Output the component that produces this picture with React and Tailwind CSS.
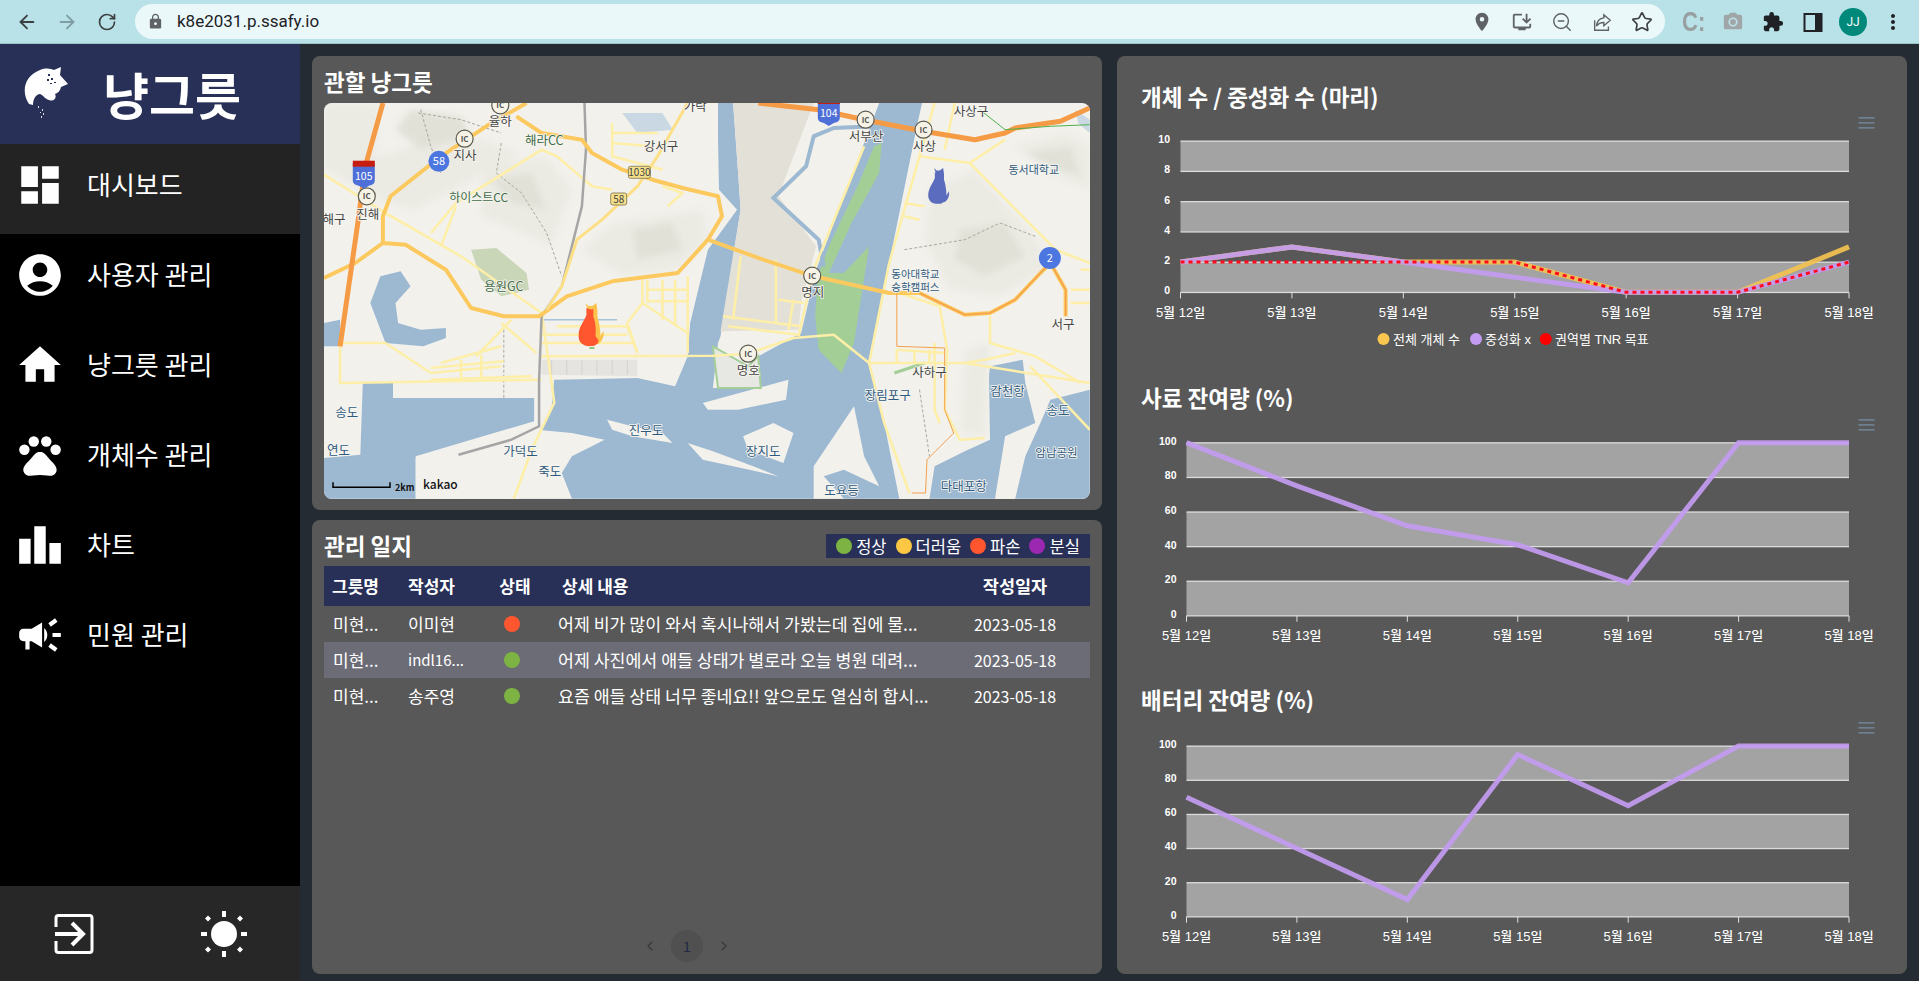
import React from "react";
import { ArrowLeft, ArrowRight, RotateCw, ZoomOut, Star, ChevronLeft, ChevronRight } from "lucide-react";
import { MdDashboard, MdAccountCircle, MdHome, MdPets, MdLeaderboard, MdCampaign, MdLock, MdLocationOn, MdInstallDesktop, MdExtension, MdCameraAlt, MdMoreVert } from "react-icons/md";

const X = (z) => +((z - 28) / 1.985).toFixed(1);
const Y = (z) => +((z - 40) / 3).toFixed(1);
const pts = (s) => s.trim().split(/\s+/).map((p) => { const [a, b] = p.split(","); return `${X(+a)},${Y(+b)}`; }).join(" ");

const water = [
  "810,40 810,150 812,300 848,360 790,480 755,700 750,800 725,890 650,865 485,870 480,950 440,1080 415,1227 1170,1227 1140,1000 1108,820 1150,520 1205,110 1215,40",
  "105,880 165,880 165,925 445,925 445,995 320,1050 210,1100 210,1227 28,1227 28,1105 100,1095",
  "140,560 180,545 200,590 170,640 175,700 220,720 270,715 270,745 225,770 150,760 120,640",
  "1350,830 1415,810 1420,880 1440,1000 1380,1040 1360,1227 1230,1227 1240,1130 1300,1085 1350,1050 1348,860",
  "1548,900 1548,1227 1400,1227 1420,1100 1450,1000 1470,930",
  "28,700 60,690 60,770 28,770",
];
const land = [
  "840,40 1130,40 1100,160 1005,540 975,730 890,800 895,895 800,895 810,760 815,740 855,360 850,250",
  "590,990 640,1010 700,1030 720,1060 640,1040 600,1020",
  "750,1060 780,1110 840,1130 930,1160 880,1130 800,1085",
  "780,940 950,870 945,930 850,960 790,960",
  "860,1040 920,1000 960,1030 940,1120 870,1080",
  "1000,1130 1080,950 1100,1100 1130,1190 1060,1140 1020,1160 1060,1227 1000,1227",
  "210,1105 450,1020 520,1030 585,1050 520,1100 500,1150 520,1227 210,1227",
];
const hills = [
  "28,40 140,40 130,200 250,150 340,150 420,190 300,290 210,360 150,340 28,240",
  "340,230 470,200 520,300 480,470 420,430 340,380",
  "600,400 780,360 790,450 730,540 620,560 540,480",
  "1230,300 1320,240 1450,460 1460,540 1370,620 1270,600 1220,460",
  "1300,780 1350,760 1340,1040 1290,1030",
  "1400,170 1500,130 1548,170 1548,300 1470,250",
  "290,1150 400,1120 390,1227 300,1227",
];
const hillsDeep = [
  "200,60 300,80 320,140 220,180 170,120",
  "360,270 440,250 470,360 400,340",
  "640,420 720,400 740,480 650,510",
  "1290,420 1380,400 1420,500 1340,560 1280,510",
  "1420,190 1510,170 1530,260 1470,230",
];
const boundaries = ["220,60 240,170 260,250", "215,70 300,90 380,130", "380,160 370,250 420,310 470,430 500,560", "1180,480 1300,450 1370,400 1440,440", "385,720 385,930", "1210,900 1230,1100"];
const roadsOrange = [
  "145,40 110,230 95,400 60,770",
  "890,40 1010,60 1100,90 1218,125 1320,150 1380,130 1400,115 1490,95 1548,55",
];
const roadsYellow = [
  "430,40 350,110 260,200 160,320 145,380 145,460",
  "28,565 90,520 145,460 190,465 270,540 320,655 385,680 455,680 510,620 600,575 730,550 790,450 818,380 810,320 740,295 680,270 620,240 560,190 540,150 460,130 410,80",
  "790,450 900,510 1000,560 1150,610 1210,610 1300,675 1350,670 1400,630 1450,550 1470,520 1500,600 1500,680",
  "750,40 690,200 650,290 580,390 530,450 500,590 470,660",
];
const roadsPale = [
  "28,255 150,370 300,500 460,670", "60,770 60,880 460,870", "60,760 150,760 240,850", "240,850 380,830", "240,870 440,860", "260,820 380,770", "240,835 385,815", "300,810 300,870", "340,795 340,865",
  "460,800 800,798 870,792 960,745 1040,735 1110,820 1300,820 1548,880", "490,710 630,710 650,790", "460,760 640,760", "460,735 630,735",
  "660,570 660,640 630,700 650,790", "660,640 750,730 750,790", "750,560 750,730", "670,600 750,600", "670,635 750,635", "700,570 700,690", "670,570 670,640", "725,570 725,710",
  "480,880 485,940 440,1080 405,1227", "460,670 480,880", "1240,40 1210,200 1150,520 1110,820 1140,1000 1190,1210", "1210,200 1310,220 1380,150",
  "1310,220 1480,480 1548,520", "1170,610 1250,650 1265,780 1260,960 1290,1050 1340,1045", "1350,680 1350,760 1440,800 1530,880", "1100,170 1000,540 970,740",
  "855,500 840,690", "820,680 975,710", "830,710 970,735", "930,630 980,640", "925,510 925,700", "960,630 950,720", "600,100 600,200 700,240", "600,130 690,130", "600,160 680,170",
  "240,430 290,340 460,180 490,200 560,290 600,300", "290,350 260,470", "380,700 450,790", "400,690 330,800", "1180,340 1220,350", "1180,380 1210,390", "1165,780 1260,790", "1165,780 1165,820", "1200,780 1200,820", "1230,780 1230,820",
  "1240,760 1240,960 1250,1000", "1300,820 1340,810 1400,790", "1430,830 1548,1020", "1280,40 1260,180", "700,290 740,310 710,350", "1530,540 1548,540", "1510,600 1548,600", "1510,640 1548,640",
];
const labels = [
  ["율하",378,95],["해라CC",465,152,"g"],["지사",308,197],["강서구",697,168],["가락",765,50],["사상구",1312,65],["서부산",1104,140],["사상",1220,170],["동서대학교",1437,238,"b",11],
  ["하이스트CC",335,322,"g",12],["진해",115,372],["해구",48,388],["용원GC",385,590,"g"],["명지",998,607],["동아대학교",1202,550,"b",10.5],["승학캠퍼스",1202,590,"b",10.5],["서구",1495,703],["사하구",1230,848],["명호",870,842],
  ["장림포구",1147,915,"b"],["감천항",1385,903,"b"],["송도",1485,962,"b"],["암남공원",1482,1087,"b",11.5],["송도",73,968,"b"],["연도",57,1080,"b"],["진우도",667,1020,"b"],["장지도",900,1085,"b"],["가덕도",418,1083,"b"],["죽도",476,1143,"b"],["도요등",1055,1200,"b"],["다대포항",1298,1190,"b"],
];
const ics = [[113,320],[307,147],[378,47],[1103,90],[1218,120],[997,558],[870,792]];

function Cat({ x, y, w, h, fill, back }) {
  return (
    <svg x={x} y={y} width={w} height={h} viewBox="0 0 26 47">
      <path d="M7 0 L10 3 L14 3 L18 0 L19 7 L19 14 C21 20 22 28 22 33 L25 28 C26 33 24 38 20 41 L15 41 L12 14 Z" fill={back || fill} />
      <path d="M8 5 C11 6 13 7 15 6 L15 14 C17 18 18 28 17 33 L20 37 C20 41 17 43 13 43 C6 44 0 40 0 33 C0 24 6 18 8 12 Z" fill={fill} />
      {back && <rect x="11" y="44" width="5" height="2" fill="#8cc77c" />}
    </svg>
  );
}

function KakaoMap() {
  return (
    <svg viewBox="0 0 766 396" width="766" height="396" className="block">
      <rect width="766" height="396" fill="#f3f1ec" />
      <g className="blur-[3px]">
        {hills.map((p, i) => <polygon key={i} points={pts(p)} fill="#ebebe4" />)}
        {hillsDeep.map((p, i) => <polygon key={i} points={pts(p)} fill="#e1e1d8" />)}
      </g>
      <polygon points={pts("320,480 370,475 430,550 435,600 380,620 340,570")} fill="#c9d6b8" />
      <polygon points={pts("620,70 700,70 720,120 650,130")} fill="#c9d8e2" />
      <polygon points={pts("1520,60 1548,90 1548,130 1525,100")} fill="#c9d8e2" />
      <polygon points={pts("460,810 650,810 650,860 460,855")} fill="#e6e4e0" />
      {boundaries.map((p, i) => <polyline key={i} points={pts(p)} fill="none" stroke="#a7a79a" strokeWidth="1" strokeDasharray="3 2" />)}
      {water.map((p, i) => <polygon key={i} points={pts(p)} fill="#9db9d2" />)}
      {land.map((p, i) => <polygon key={i} points={pts(p)} fill="#f3f1ec" />)}
      <polygon points={pts("840,40 1000,40 930,320 1005,470 975,640 970,720 815,725 855,360 850,250")} fill="#e3e0d8" />
      <polygon points={pts("1135,160 1120,170 1090,280 1030,470 1008,560 1003,680 1010,780 1055,850 1080,760 1110,470 1060,550 1030,550 1075,400 1130,250")} fill="#a3cf97" />
      <polygon points={pts("800,770 810,895 895,895 890,800 870,830")} fill="#e7e7e4" stroke="#a3cf97" strokeWidth="2" />
      <polyline points={pts("1120,110 1040,115 1000,140 985,230 920,325 1010,450 1020,530")} fill="none" stroke="#9db9d2" strokeWidth="4" />
      <polyline points={pts("460,690 520,690 610,690")} fill="none" stroke="#a8c4dc" strokeWidth="1.5" />
      <polyline points={pts("1160,850 1220,820")} fill="none" stroke="#a3cf97" strokeWidth="3" />
      {roadsPale.map((p, i) => <polyline key={i} points={pts(p)} fill="none" stroke="#fdeea8" strokeWidth="2.6" strokeLinejoin="round" />)}
      {[480, 510, 540, 570, 600, 630].map((a) => <line key={a} x1={X(a)} y1={Y(812)} x2={X(a)} y2={Y(855)} stroke="#cfcdc8" strokeWidth="0.8" />)}
      <polyline points={pts("545,40 548,180 540,350 500,590 460,680 455,870 455,1010 400,1050 295,1095")} fill="none" stroke="#a5a5a5" strokeWidth="2.5" />
      {roadsYellow.map((p, i) => <polyline key={i} points={pts(p)} fill="none" stroke={i === 3 ? "#fddf86" : "#fcc95f"} strokeWidth={i === 3 ? 3 : 4} strokeLinejoin="round" />)}
      <polyline points={pts("1210,610 1300,675 1350,670 1400,630 1450,550 1470,520 1500,600 1500,680")} fill="none" stroke="#f4a04c" strokeWidth="1.5" />
      <polyline points={pts("1165,610 1165,770 1260,775 1260,960 1278,1030 1225,1110 1222,1210 1195,1210")} fill="none" stroke="#f4a04c" strokeWidth="1" />
      {roadsOrange.map((p, i) => <polyline key={i} points={pts(p)} fill="none" stroke="#f69b45" strokeWidth="5" strokeLinejoin="round" />)}
      <polyline points={pts("1330,60 1380,120 1470,110 1548,105")} fill="none" stroke="#4db04d" strokeWidth="1" />
      {ics.map(([a, b], i) => (
        <g key={i}>
          <circle cx={X(a)} cy={Y(b)} r="8.5" fill="#f6f3e6" stroke="#5b5b50" strokeWidth="1.2" />
          <text x={X(a)} y={Y(b) + 3} textAnchor="middle" fontSize="8" fontWeight="700" fill="#555">IC</text>
        </g>
      ))}
      <circle cx={X(256)} cy={Y(215)} r="10.5" fill="#4c76e0" />
      <text x={X(256)} y={Y(215) + 4} textAnchor="middle" fontSize="11" fill="#fff">58</text>
      <circle cx={X(1469)} cy={Y(505)} r="11" fill="#4c76e0" />
      <text x={X(1469)} y={Y(505) + 4} textAnchor="middle" fontSize="11" fill="#fff">2</text>
      {[[107, 258, "105"], [1030, 70, "104"]].map(([a, b, t]) => (
        <g key={t}>
          <path d={`M${X(a) - 11} ${Y(b) - 12} h22 v17 q0 4 -6 5 l-5 3 l-5 -3 q-6 -1 -6 -5 Z`} fill="#4f6fd8" />
          <rect x={X(a) - 11} y={Y(b) - 15} width="22" height="6" fill="#c51d10" />
          <text x={X(a)} y={Y(b) + 4} textAnchor="middle" fontSize="10.5" fill="#fff">{t}</text>
        </g>
      ))}
      {[[654, 248, "1030", 22], [613, 328, "58", 16]].map(([a, b, t, w]) => (
        <g key={t}>
          <rect x={X(a) - w / 2} y={Y(b) - 6} width={w} height="12" rx="2" fill="#f5e08a" stroke="#77704a" strokeWidth="0.8" />
          <text x={X(a)} y={Y(b) + 4} textAnchor="middle" fontSize="10" fill="#444">{t}</text>
        </g>
      ))}
      {labels.map(([t, a, b, k, s], i) => (
        <text key={i} x={X(a)} y={Y(b) + 5} textAnchor="middle" fontSize={s || 12.5} stroke="#f6f5f0" strokeWidth="1.6" paintOrder="stroke"
          fill={k === "g" ? "#3f6b47" : k === "b" ? "#2f5a80" : "#444"}>{t}</text>
      ))}
      <Cat x={X(533)} y={Y(640)} w="26" h="47" fill="#ff5630" back="#fcc34c" />
      <Cat x={X(1227)} y={Y(235)} w="22" h="39" fill="#5b6bbd" />
      <path d={`M9 ${Y(1178)} v5 h57 v-5`} fill="none" stroke="#000" strokeWidth="1.5" />
      <text x="71" y={Y(1192) + 4} fontSize="9" fontWeight="700" fill="#111">2km</text>
      <text x="99" y={Y(1187) + 4} fontSize="12" fontWeight="500" fill="#111">kakao</text>
    </svg>
  );
}

const xTicks = ["5월 12일", "5월 13일", "5월 14일", "5월 15일", "5월 16일", "5월 17일", "5월 18일"];

function Chart({ vbY, h, left, top, bottom, ticks, labelY, series, burger, legend, labelX }) {
  const right = 1849;
  const n = ticks.length - 1;
  const yAt = (i) => top + ((bottom - top) * i) / n;
  const xAt = (i) => left + ((right - left) * i) / 6;
  const max = +ticks[0];
  const valY = (v) => bottom - ((bottom - top) * v) / max;
  return (
    <svg viewBox={`1117 ${vbY} 790 ${h}`} width="790" height={h} className="block font-['Liberation_Sans','Noto_Sans_CJK_KR',sans-serif]">
      <g fill="#6e8192">
        <rect x="1858.5" y={burger} width="16" height="1.7" />
        <rect x="1858.5" y={burger + 5} width="16" height="1.7" />
        <rect x="1858.5" y={burger + 10} width="16" height="1.7" />
      </g>
      {[0, 2, 4].map((i) => <rect key={i} x={left} y={yAt(i)} width={right - left} height={yAt(i + 1) - yAt(i)} fill="#a3a3a3" />)}
      {ticks.map((t, i) => (
        <g key={t}>
          <rect x={left} y={yAt(i) - 0.5} width={right - left} height="1.3" fill="#dcdcdc" />
          <text x={labelX} y={yAt(i) + 2} textAnchor="end" fontSize="10.5" fontWeight="700" fill="#fff">{t}</text>
        </g>
      ))}
      {xTicks.map((t, i) => (
        <g key={t}>
          <rect x={xAt(i) - 0.5} y={bottom} width="1" height="6" fill="#e0e0e0" />
          <text x={xAt(i)} y={labelY} textAnchor="middle" fontSize="13" fontWeight="500" fill="#fff">{t}</text>
        </g>
      ))}
      {series.map((s, k) => (
        <polyline key={k} points={s.data.map((v, i) => `${xAt(i)},${valY(v)}`).join(" ")} fill="none" stroke={s.color} strokeWidth={s.w || 5}
          strokeDasharray={s.dash} strokeOpacity={s.dash ? 1 : 0.92} strokeLinejoin="miter" />
      ))}
      {legend && (
        <g fontSize="13" fill="#fff">
          <circle cx="1383.5" cy="339" r="6" fill="#f9c74f" />
          <text x="1393" y="343.500">전체 개체 수</text>
          <circle cx="1476" cy="339" r="6" fill="#c39bf0" />
          <text x="1485" y="343.500">중성화 x</text>
          <circle cx="1545.7" cy="339" r="6" fill="#ff0000" />
          <text x="1555" y="343.500">권역별 TNR 목표</text>
        </g>
      )}
    </svg>
  );
}

const nav = [
  [MdDashboard, "대시보드"], [MdAccountCircle, "사용자 관리"], [MdHome, "냥그릇 관리"], [MdPets, "개체수 관리"], [MdLeaderboard, "차트"], [MdCampaign, "민원 관리"],
];
const rows = [
  ["미현...", "이미현", "#ff5630", "어제 비가 많이 와서 혹시나해서 가봤는데 집에 물...", false],
  ["미현...", "indl16...", "#7cb342", "어제 사진에서 애들 상태가 별로라 오늘 병원 데려...", true],
  ["미현...", "송주영", "#7cb342", "요즘 애들 상태 너무 좋네요!! 앞으로도 열심히 합시...", false],
];
const legendItems = [["#7cb342", "정상"], ["#fcc742", "더러움"], ["#ff5630", "파손"], ["#9c27b0", "분실"]];

function Browser() {
  return (
    <div className="h-[44px] shrink-0 bg-[#b8e2e7] border-b border-[#9cc3c8] flex items-center text-[#3c4043]">
      <div className="w-[135px] shrink-0 flex items-center pl-[16px] gap-[18px]">
        <ArrowLeft size={22} strokeWidth={2} />
        <ArrowRight size={22} strokeWidth={2} className="text-[#7f9ea2]" />
        <RotateCw size={20} strokeWidth={2} className="ml-[1px]" />
      </div>
      <div className="w-[1530px] h-[35px] rounded-full bg-[#ebf8f9] flex items-center pl-[12px] pr-[12px]">
        <MdLock size={17} className="text-[#5f6368]" />
        <span className="ml-[13px] text-[17px] text-[#202124] font-['Roboto',sans-serif]">k8e2031.p.ssafy.io</span>
        <div className="ml-auto flex items-center gap-[18px] text-[#5f6368]">
          <MdLocationOn size={22} />
          <MdInstallDesktop size={22} />
          <ZoomOut size={22} strokeWidth={1.6} />
          <svg width="22" height="22" viewBox="0 0 24 24" fill="none" stroke="currentColor" strokeWidth="1.5"><path d="M4 10v11h15v-4" /><path d="M14 4l7 6-7 6v-3.5c-3.5 0-6 1-8 4 .5-5 3.500-8.500 8-9z" /></svg>
          <Star size={22} strokeWidth={1.8} className="text-[#3c4043]" />
        </div>
      </div>
      <div className="flex-1 flex items-center pl-[17px] gap-[18px]">
        <span className="w-[22px] text-center text-[22px] font-bold text-[#989fa1] font-['Liberation_Sans',sans-serif] leading-none scale-y-125">C:</span>
        <MdCameraAlt size={22} className="text-[#a0a6a8]" />
        <MdExtension size={22} className="text-[#202124]" />
        <svg width="22" height="22" viewBox="0 0 22 22"><rect x="2.500" y="3" width="17" height="17" fill="none" stroke="#202124" strokeWidth="2" /><rect x="13" y="3" width="7" height="17" fill="#202124" /></svg>
        <div className="w-[28px] h-[28px] -ml-[3px] rounded-full bg-[#00897b] text-white text-[12px] flex items-center justify-center font-['Roboto',sans-serif]">JJ</div>
        <MdMoreVert size={24} className="-ml-[4px] text-[#202124]" />
      </div>
    </div>
  );
}

function Sidebar() {
  return (
    <aside className="w-[300px] shrink-0 bg-black flex flex-col text-white">
      <div className="h-[100px] bg-[#283058] flex items-center">
        <svg width="46" height="52" viewBox="0 0 46 52" className="ml-[23px] mb-[3px]">
          <path d="M6 37 C-2 25 1 9 17 3 C24 0 28 2 31 3 L38 0 L37 8 L45 17 L38 20 C37 24 35 26 32 27 C34 31 31 35 26 33 C22 32 20 28 17 27 C13 27 10 32 10 38 Z" fill="#fff" />
          <path d="M25 7h2v2h-2zM28 11h2v2h-2zM24 12h2v2h-2zM31 15h2v1h-2zM27 16h2v1h-2z" fill="#283058" />
          <path d="M15 39h1v2h-1zM19 42h1v2h-1zM17 45h1v1h-1zM20 46h1v2h-1zM18 49h1v2h-1z" fill="#ddd" />
        </svg>
        <span className="ml-[34px] -mt-[3px] text-[50px] font-bold leading-none">냥그릇</span>
      </div>
      {nav.map(([Icon, label], i) => (
        <div key={label} className={`h-[90px] flex items-center pl-[15px] pb-[8px] ${i === 0 ? "bg-[#232323]" : ""}`}>
          <Icon size={50} className="shrink-0" />
          <span className="ml-[22px] -mt-[3px] text-[26px] leading-none">{label}</span>
        </div>
      ))}
      <div className="mt-auto h-[95px] bg-[#272727] flex items-center justify-around">
        <svg width="44" height="44" viewBox="0 0 44 44" fill="none" stroke="#fff" strokeWidth="3">
          <path d="M4 15 V6 q0 -2.500 2.500 -2.500 h31 q2.500 0 2.500 2.500 v32 q0 2.500 -2.500 2.500 h-31 q-2.500 0 -2.500 -2.500 v-9" />
          <path d="M3 22 H32" strokeWidth="4" />
          <path d="M20 11 L31 22 L20 33" strokeWidth="4" />
        </svg>
        <svg width="48" height="48" viewBox="0 0 48 48" fill="#fff">
          <circle cx="24" cy="24" r="13" />
          <rect x="22" y="1" width="4" height="6" />
          <rect x="22" y="41" width="4" height="6" />
          <rect x="1" y="22" width="6" height="4" />
          <rect x="41" y="22" width="6" height="4" />
          <path d="M8 5.500l3 3-3 3-3-3zM40 5.500l3 3-3 3-3-3zM8 36.500l3 3-3 3-3-3zM40 36.500l3 3-3 3-3-3z" />
        </svg>
      </div>
    </aside>
  );
}

function MapPanel() {
  return (
    <section className="h-[454px] rounded-lg bg-[#585858] px-[12px] flex flex-col">
      <h2 className="h-[47px] flex items-center pt-[5px] text-[22.5px] font-bold text-white">관할 냥그릇</h2>
      <div className="rounded-lg overflow-hidden w-[766px] h-[396px]">
        <KakaoMap />
      </div>
    </section>
  );
}

function LogPanel() {
  return (
    <section className="h-[454px] rounded-lg bg-[#585858] px-[12px] flex flex-col text-white">
      <div className="h-[46px] flex items-center justify-between pt-[6px]">
        <h2 className="text-[22.5px] font-bold">관리 일지</h2>
        <div className="h-[24px] w-[264px] bg-[#283058] flex items-center justify-center gap-[9px] text-[16.5px]">
          {legendItems.map(([c, t]) => (
            <span key={t} className="flex items-center gap-[4px]">
              <span className="w-[16px] h-[16px] rounded-full" style={{ backgroundColor: c }} />
              {t}
            </span>
          ))}
        </div>
      </div>
      <div className="grid grid-cols-[76px_84px_62px_394px_150px] h-[40px] bg-[#283058] items-center text-[17px] font-semibold">
        <span className="pl-[8px]">그릇명</span>
        <span className="pl-[8px]">작성자</span>
        <span className="text-center">상태</span>
        <span className="pl-[16px]">상세 내용</span>
        <span className="text-center text-[17.5px]">작성일자</span>
      </div>
      {rows.map(([a, b, c, d, hl], i) => (
        <div key={i} className={`grid grid-cols-[76px_84px_62px_394px_150px] h-[36px] items-center text-[17px] ${hl ? "bg-[#6c6c76]" : ""}`}>
          <span className="pl-[9px] whitespace-nowrap">{a}</span>
          <span className={`pl-[8px] whitespace-nowrap ${i === 1 ? "text-[15px]" : ""}`}>{b}</span>
          <span className="flex justify-center pr-[7px]"><span className="w-[16px] h-[16px] rounded-full" style={{ backgroundColor: c }} /></span>
          <span className="pl-[12px] whitespace-nowrap text-[17.3px]">{d}</span>
          <span className="text-center text-[16px]">2023-05-18</span>
        </div>
      ))}
      <div className="mt-auto mb-[12px] pr-[40px] flex items-center justify-center gap-[13px] text-[#3a3a3a]">
        <ChevronLeft size={16} />
        <span className="w-[32px] h-[32px] rounded-full bg-[#505050] flex items-center justify-center text-[14px] text-[#1f2a44]">1</span>
        <ChevronRight size={16} />
      </div>
    </section>
  );
}

function ChartPanel() {
  return (
    <section className="w-[790px] rounded-lg bg-[#585858] text-white flex flex-col">
      <h2 className="pl-[24px] pt-[25px] text-[22.5px] leading-[30px] font-bold">개체 수 / 중성화 수 (마리)</h2>
      <Chart vbY={111} h={245} left={1180.5} top={141} bottom={292.3} labelX={1170} labelY={317} burger={117} legend
        ticks={["10", "8", "6", "4", "2", "0"]}
        series={[
          { data: [2, 3, 2, 2, 0, 0, 3], color: "#f3c250" },
          { data: [2, 3, 2, 1, 0, 0, 2], color: "#c39bf0" },
          { data: [2, 2, 2, 2, 0, 0, 2], color: "#ff0a1f", w: 3, dash: "4 4" },
        ]} />
      <h2 className="pl-[24px] pt-[26px] text-[22.5px] leading-[30px] font-bold">사료 잔여량 (%)</h2>
      <Chart vbY={412} h={248} left={1186.5} top={442.7} bottom={615.7} labelX={1176.5} labelY={640} burger={419}
        ticks={["100", "80", "60", "40", "20", "0"]}
        series={[{ data: [100, 75, 52, 41, 19, 100, 100], color: "#c39bf0" }]} />
      <h2 className="pl-[24px] pt-[24px] text-[22.5px] leading-[30px] font-bold">배터리 잔여량 (%)</h2>
      <Chart vbY={714} h={260} left={1186.5} top={746} bottom={916.7} labelX={1176.5} labelY={941} burger={722}
        ticks={["100", "80", "60", "40", "20", "0"]}
        series={[{ data: [70, 40, 10, 95, 65, 100, 100], color: "#c39bf0" }]} />
    </section>
  );
}

export default function App() {
  return (
    <div className="w-[1919px] h-[981px] overflow-hidden flex flex-col bg-[#242b33] font-['Noto_Sans_CJK_KR','Noto_Sans',sans-serif]">
      <Browser />
      <div className="flex-1 min-h-0 flex">
        <Sidebar />
        <main className="flex-1 flex gap-[15px] pl-[12px] pt-[12px] pb-[7px]">
          <div className="w-[790px] flex flex-col gap-[10px]">
            <MapPanel />
            <LogPanel />
          </div>
          <ChartPanel />
        </main>
      </div>
    </div>
  );
}
